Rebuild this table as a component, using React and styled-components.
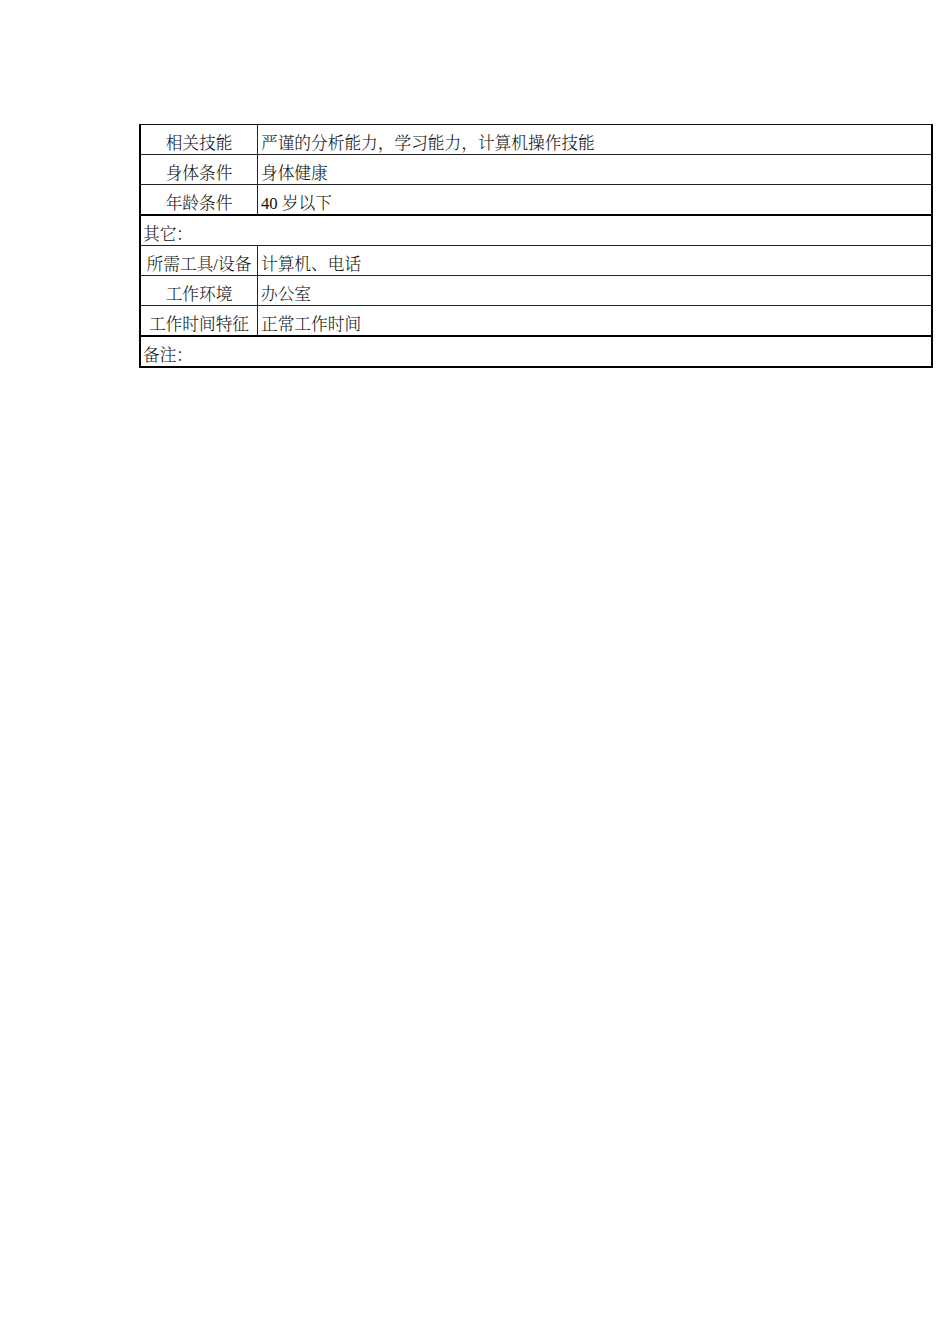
import React from "react";
import styled, { createGlobalStyle } from "styled-components";

const GlobalStyle = createGlobalStyle`
  html, body {
    margin: 0;
    padding: 0;
    background: #fff;
  }
  body {
    font-family: "Liberation Serif", "Noto Serif CJK SC", "Noto Sans CJK SC", serif;
    color: #000;
  }
`;

// rows of the job description sheet
const rows = [
  { label: "相关技能", value: "严谨的分析能力，学习能力，计算机操作技能" },
  { label: "身体条件", value: "身体健康" },
  { label: "年龄条件", value: "40 岁以下", thick: true },
  { note: "其它：" },
  { label: "所需工具/设备", value: "计算机、电话" },
  { label: "工作环境", value: "办公室" },
  { label: "工作时间特征", value: "正常工作时间", thick: true },
  { note: "备注：", thick: true },
];

function App() {
  return (
    <Page>
      <GlobalStyle />
      <Sheet>
        {rows.map((row, index) =>
          row.note ? (
            <Row key={index} $thick={row.thick}>
              <NoteCell>{row.note}</NoteCell>
            </Row>
          ) : (
            <Row key={index} $thick={row.thick}>
              <LabelCell>{row.label}</LabelCell>
              <ValueCell>{row.value}</ValueCell>
            </Row>
          )
        )}
      </Sheet>
    </Page>
  );
}

export default App;

const Page = styled.div`
  padding: 124px 0 0 139px;
  min-height: 1220px;
`;

const Sheet = styled.div`
  width: 790px;
  border-top: 1px solid #111;
  border-left: 2px solid #000;
  border-right: 2px solid #000;
  display: flex;
  flex-direction: column;
`;

const Row = styled.div`
  display: flex;
  height: 29px;
  border-bottom: ${(p) => (p.$thick ? "2px solid #000" : "1px solid #222")};
`;

const Cell = styled.div`
  display: flex;
  align-items: flex-end;
  font-size: 16.7px;
  font-weight: 300;
  line-height: 17px;
  padding-bottom: 2px;
  box-sizing: border-box;
  white-space: nowrap;
  color: #111;
`;

const LabelCell = styled(Cell)`
  width: 117px;
  flex: none;
  justify-content: center;
  border-right: 1px solid #222;
`;

const ValueCell = styled(Cell)`
  flex: 1;
  padding-left: 3px;
`;

const NoteCell = styled(Cell)`
  flex: 1;
  padding-left: 2px;
`;
